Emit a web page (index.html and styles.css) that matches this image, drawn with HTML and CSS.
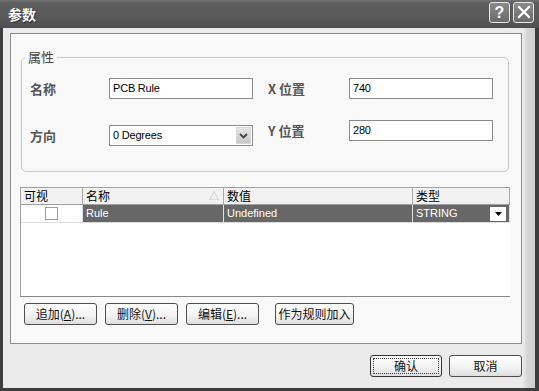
FILE: index.html
```html
<!DOCTYPE html>
<html>
<head>
<meta charset="utf-8">
<link rel="stylesheet" href="styles.css">
</head>
<body>
<div class="window">
  <div class="titlebar">
    <span class="title">参数</span>
    <div class="tb-buttons">
      <span class="tb-btn">?</span>
      <span class="tb-btn tb-close">
        <svg width="14" height="14" viewBox="0 0 14 14"><path d="M2 2 L12 12 M12 2 L2 12" stroke="#fff" stroke-width="2.2" stroke-linecap="square"/></svg>
      </span>
    </div>
  </div>
  <div class="body">
    <div class="panel">
      <fieldset class="group">
        <legend>属性</legend>
        <div class="cols">
          <div class="col col-left">
            <div class="field"><span class="lbl">名称</span><div class="input">PCB Rule</div></div>
            <div class="field"><span class="lbl">方向</span><div class="input combo">0 Degrees<span class="combo-btn"><svg width="9" height="6" viewBox="0 0 9 6"><path d="M1 1 L4.5 4.5 L8 1" fill="none" stroke="#444" stroke-width="1.8"/></svg></span></div></div>
          </div>
          <div class="col col-right">
            <div class="field"><span class="lbl lbl-r">X 位置</span><div class="input">740</div></div>
            <div class="field"><span class="lbl lbl-r">Y 位置</span><div class="input">280</div></div>
          </div>
        </div>
      </fieldset>

      <div class="grid">
        <div class="grow ghead">
          <div class="c c1">可视</div>
          <div class="c c2">名称<span class="sort">△</span></div>
          <div class="c c3">数值</div>
          <div class="c c4">类型</div>
        </div>
        <div class="grow grow-sel">
          <div class="c c1 cwhite"><span class="check"></span></div>
          <div class="c c2">Rule</div>
          <div class="c c3">Undefined</div>
          <div class="c c4">STRING<span class="dd"><svg width="7" height="4" viewBox="0 0 7 4"><path d="M0 0 H7 L3.5 4 Z" fill="#000"/></svg></span></div>
        </div>
        <div class="gfill"></div>
      </div>

      <div class="btnrow">
        <button class="btn">追加(<u>A</u>)...</button>
        <button class="btn">删除(<u>V</u>)...</button>
        <button class="btn">编辑(<u>E</u>)...</button>
        <button class="btn btn-wide">作为规则加入</button>
      </div>
    </div>
    <div class="footer">
      <button class="btn btn-ok"><span class="focus">确认</span></button>
      <button class="btn btn-cancel">取消</button>
    </div>
  </div>
</div>
</body>
</html>
```

FILE: styles.css
```css
* { box-sizing: border-box; }
html, body { margin: 0; padding: 0; }
body {
  font-family: "Liberation Sans", "Noto Sans CJK SC", sans-serif;
  font-size: 12px;
  color: #000;
}
.window {
  width: 539px;
  height: 391px;
  background: #3e3e3e;
  display: flex;
  flex-direction: column;
}
.titlebar {
  height: 28px;
  background: linear-gradient(#727272 0, #5e5e5e 3px, #575757 20px, #4e4e4e 28px);
  display: flex;
  align-items: center;
  justify-content: space-between;
  padding: 0 5px 0 8px;
}
.title {
  color: #fff;
  font-family: "Noto Sans CJK SC", sans-serif;
  font-weight: bold;
  font-size: 14px;
  text-shadow: 1px 1px 0 #333;
  margin-top: -1px;
}
.tb-buttons { display: flex; gap: 3px; margin-top: -4px; }
.tb-btn {
  width: 21px;
  height: 21px;
  border: 1px solid #e8e8e8;
  border-radius: 3px;
  background: linear-gradient(#8a8a8a, #6a6a6a);
  color: #fff;
  font-family: "Liberation Sans", sans-serif;
  font-weight: bold;
  font-size: 16px;
  line-height: 19px;
  text-align: center;
  display: flex;
  align-items: center;
  justify-content: center;
}
.body {
  flex: 1;
  margin: 0 4px 3px 3px;
  background: linear-gradient(to right, #ebebeb 0, #ebebeb 520px, #d6d6d6 524px, #cfcfcf 532px);
  padding: 5px 10px 0 7px;
}
.panel {
  width: 512px;
  height: 311px;
  background: #f9f9f9;
  border: 1px solid #8c8c8c;
  display: flex;
  flex-direction: column;
}
.group {
  margin: 16px 0 0 10px;
  width: 488px;
  height: 122px;
  padding: 0;
  border: 1px solid #c9c9c9;
  border-radius: 5px;
  min-width: 0;
}
.group legend {
  font-family: "Noto Sans CJK SC", sans-serif;
  font-size: 13px;
  line-height: 14px;
  color: #444;
  padding: 0 3px;
  margin-left: 3px;
}
.cols {
  display: flex;
  gap: 15px;
  padding: 14px 0 0 8px;
}
.col { display: flex; flex-direction: column; }
.col-left { gap: 26px; }
.col-right { gap: 21px; }
.field { display: flex; align-items: center; }
.lbl {
  width: 79px;
  font-family: "Noto Sans CJK SC", sans-serif;
  font-weight: bold;
  font-size: 13px;
  color: #555;
}
.lbl-r { width: 81px; }
.input {
  width: 144px;
  height: 21px;
  border: 1px solid #8a8a8a;
  background: #fff;
  padding: 0 0 0 3px;
  line-height: 19px;
  font-size: 11px;
  position: relative;
  letter-spacing: -0.2px;
}
.combo-btn {
  position: absolute;
  right: 1px;
  top: 1px;
  width: 15px;
  height: 17px;
  background: linear-gradient(#e6e6e6, #c8c8c8);
  border: 1px solid #d8d8d8;
  display: flex;
  align-items: center;
  justify-content: center;
}
.grid {
  margin: 15px 0 0 9px;
  width: 490px;
  height: 110px;
  background: #fff;
  border-top: 1px solid #a0a0a0;
  border-left: 1px solid #a0a0a0;
  border-bottom: 1px solid #888;
  display: flex;
  flex-direction: column;
}
.grow { display: flex; }
.ghead {
  height: 17px;
  background: #f2f2f2;
  border-bottom: 1px solid #a0a0a0;
}
.ghead .c {
  font-family: "Noto Sans CJK SC", sans-serif;
  font-size: 12px;
  line-height: 16px;
  padding-left: 3px;
  border-right: 1px solid #a8a8a8;
  position: relative;
}
.c1 { width: 62px; }
.c2 { width: 141px; }
.c3 { width: 189px; }
.c4 { width: 97px; }
.sort {
  position: absolute;
  right: 4px;
  top: 0;
  color: #b5b5b5;
  font-size: 10px;
}
.grow-sel { height: 18px; border-bottom: 1px solid #ddd; }
.grow-sel .c {
  background: #676767;
  color: #fff;
  font-size: 11px;
  line-height: 17px;
  padding-left: 3px;
  border-right: 1px solid #e0e0e0;
  position: relative;
}
.grow-sel .cwhite {
  background: #fff;
  display: flex;
  align-items: center;
  justify-content: center;
  padding: 0;
}
.check {
  width: 13px;
  height: 13px;
  border: 1px solid #9a9a9a;
  background: #fff;
}
.dd {
  position: absolute;
  right: 3px;
  top: 2px;
  width: 16px;
  height: 14px;
  background: #fff;
  display: flex;
  align-items: center;
  justify-content: center;
}
.gfill { flex: 1; }
.btnrow {
  display: flex;
  gap: 8px;
  margin: 6px 0 0 13px;
}
.btn {
  width: 73px;
  height: 22px;
  border: 1px solid #4e4e4e;
  border-radius: 3px;
  background: linear-gradient(#ffffff, #f2f2f2 60%, #dedede);
  font-family: "Noto Sans CJK SC", sans-serif;
  font-size: 12px;
  color: #111;
  padding: 0;
  line-height: 18px;
}
.btn u { text-decoration: underline; }
.btn-wide { width: 79px; margin-left: 8px; }
.footer {
  display: flex;
  justify-content: flex-end;
  gap: 7px;
  margin-top: 11px;
  width: 512px;
}
.btn-ok { width: 72px; border-color: #333; padding: 2px; }
.btn-ok .focus {
  display: block;
  height: 16px;
  border: 1px dotted #444;
  line-height: 14px;
}
.btn-cancel { width: 73px; }
```
